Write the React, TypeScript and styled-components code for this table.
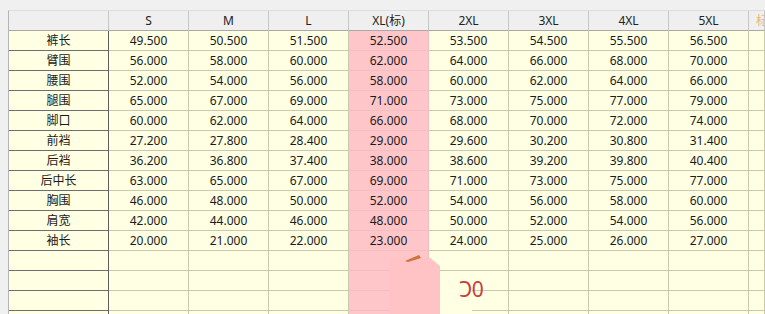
import React from "react";
import styled, { createGlobalStyle } from "styled-components";

const GlobalStyle = createGlobalStyle`
  html, body { margin: 0; padding: 0; background: #f0f0f0; }
  body { font-family: "Noto Sans", "Noto Sans CJK SC", sans-serif; font-size: 12px; color: #1b1b1b; }
`;

const Page = styled.div`
  position: relative;
  width: 765px;
  height: 314px;
  overflow: hidden;
  padding: 10px 0 0 8px;
  box-sizing: border-box;
  background: #f0f0f0;
`;

const Grid = styled.div`
  display: grid;
  grid-template-columns: 100px repeat(8, 80px) 1fr;
  grid-auto-rows: 20px;
  border-left: 1px solid #b4b4b4;
  border-top: 1px solid #dcdcdc;
`;

const HeadCell = styled.div<{ $accent?: boolean }>`
  box-sizing: border-box;
  display: flex;
  align-items: center;
  justify-content: ${(p) => (p.$accent ? "flex-start" : "center")};
  padding-left: ${(p) => (p.$accent ? "7px" : "0")};
  overflow: hidden;
  white-space: nowrap;
  background: #efefef;
  border-right: 1px solid #c6c6c6;
  border-bottom: 1px solid #a9a9a9;
  color: ${(p) => (p.$accent ? "#e6b877" : "#222")};
  line-height: 1;
`;

const LabelCell = styled.div`
  box-sizing: border-box;
  display: flex;
  align-items: center;
  justify-content: center;
  background: #ffffe4;
  border-right: 1px solid #5e5e5e;
  border-bottom: 1px solid #6e6e6e;
  line-height: 1;
`;

const DataCell = styled.div<{ $pink?: boolean }>`
  box-sizing: border-box;
  display: flex;
  align-items: center;
  justify-content: center;
  background: ${(p) => (p.$pink ? "#ffc6c9" : "#ffffe4")};
  border-right: 1px solid ${(p) => (p.$pink ? "#f0bcbf" : "#cbc8ab")};
  border-bottom: 1px solid ${(p) => (p.$pink ? "#f2bec1" : "#cbc8ab")};
  line-height: 1;
`;

const Sticker = styled.div`
  position: absolute;
  left: 348px;
  top: 250px;
  width: 140px;
  height: 64px;
  pointer-events: none;
`;

const StickerText = styled.span`
  position: absolute;
  left: 111px;
  top: 29px;
  font-family: "Noto Sans", sans-serif;
  font-size: 21px;
  line-height: 1;
  color: #c8403c;
  letter-spacing: -0.5px;
`;

const sizes = ["S", "M", "L", "XL(标)", "2XL", "3XL", "4XL", "5XL"];
const PINK = 3;

const rows: [string, string[]][] = [
  ["裤长", ["49.500", "50.500", "51.500", "52.500", "53.500", "54.500", "55.500", "56.500"]],
  ["臂围", ["56.000", "58.000", "60.000", "62.000", "64.000", "66.000", "68.000", "70.000"]],
  ["腰围", ["52.000", "54.000", "56.000", "58.000", "60.000", "62.000", "64.000", "66.000"]],
  ["腿围", ["65.000", "67.000", "69.000", "71.000", "73.000", "75.000", "77.000", "79.000"]],
  ["脚口", ["60.000", "62.000", "64.000", "66.000", "68.000", "70.000", "72.000", "74.000"]],
  ["前裆", ["27.200", "27.800", "28.400", "29.000", "29.600", "30.200", "30.800", "31.400"]],
  ["后裆", ["36.200", "36.800", "37.400", "38.000", "38.600", "39.200", "39.800", "40.400"]],
  ["后中长", ["63.000", "65.000", "67.000", "69.000", "71.000", "73.000", "75.000", "77.000"]],
  ["胸围", ["46.000", "48.000", "50.000", "52.000", "54.000", "56.000", "58.000", "60.000"]],
  ["肩宽", ["42.000", "44.000", "46.000", "48.000", "50.000", "52.000", "54.000", "56.000"]],
  ["袖长", ["20.000", "21.000", "22.000", "23.000", "24.000", "25.000", "26.000", "27.000"]],
];

const blank: [string, string[]][] = Array.from({ length: 4 }, () => ["", Array(8).fill("")]);

export default function App() {
  const all = [...rows, ...blank];
  return (
    <Page>
      <GlobalStyle />
      <Grid>
        <HeadCell />
        {sizes.map((s) => (
          <HeadCell key={s}>{s}</HeadCell>
        ))}
        <HeadCell $accent>标准</HeadCell>
        {all.map(([label, vals], r) => (
          <React.Fragment key={r}>
            <LabelCell>{label}</LabelCell>
            {vals.map((v, c) => (
              <DataCell key={c} $pink={c === PINK}>
                {v}
              </DataCell>
            ))}
            <DataCell />
          </React.Fragment>
        ))}
      </Grid>
      <Sticker>
        <svg width="140" height="64" viewBox="0 0 140 64">
          <rect x="92" y="30" width="32" height="34" fill="#ffffe4" />
          <polygon points="42,8 81,7 92,16 92,64 42,64" fill="#ffc3c6" />
          <polygon points="57,11 71,5 73,8 60,12" fill="#d2703e" />
        </svg>
        <StickerText>Ɔ0</StickerText>
      </Sticker>
    </Page>
  );
}
